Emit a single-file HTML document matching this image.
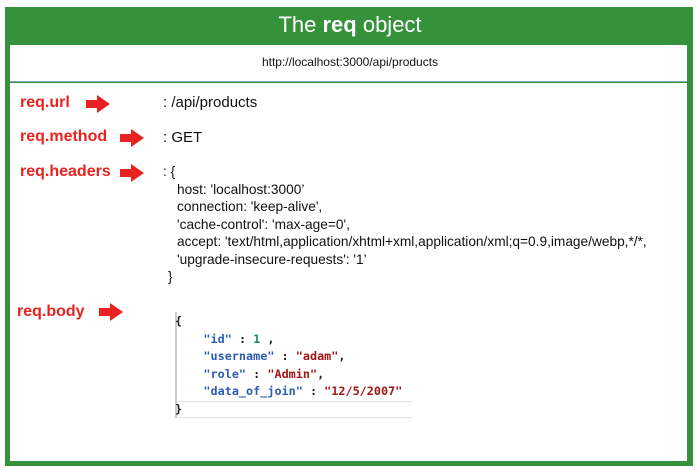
<html><head><style>
body{margin:0;width:700px;height:470px;background:#fff;position:relative;font-family:"Liberation Sans",sans-serif;overflow:hidden}
.a{position:absolute}
.lbl{color:#e8231f;font-weight:bold;font-size:16px;font-family:"Liberation Sans Narrow","Liberation Sans",sans-serif}
.arr{position:absolute;width:24px;height:18px}
.t{color:#111;font-size:15px}
.h{font-size:13.7px;color:#111;line-height:17.5px;white-space:nowrap}
.code{font-family:"DejaVu Sans Mono",monospace;font-size:11.8px;font-weight:bold;line-height:17.5px;white-space:pre}
</style></head><body>
<div class="a" style="left:5px;top:7px;width:688px;height:459px;background:#35913a"></div>
<div class="a" style="left:10px;top:45px;width:677px;height:36px;background:#fff;border-bottom:1px solid #8ab;"></div>
<div class="a" style="left:10px;top:83px;width:677px;height:378px;background:#fff"></div>
<div class="a" style="left:0;top:12px;width:700px;text-align:center;color:#fff;font-size:22px">The <b>req</b> object</div>
<div class="a" style="left:0;top:55px;width:700px;text-align:center;font-size:12px;color:#111">http://localhost:3000/api/products</div>

<div class="a lbl" style="left:20px;top:94px">req.url</div>
<svg class="arr" style="left:86px;top:95px" viewBox="0 0 24 18"><path d="M0 5h11V0l13 9-13 9v-5H0z" fill="#e8231f"/></svg>
<div class="a t" style="left:163px;top:94px">: /api/products</div>

<div class="a lbl" style="left:20px;top:128px">req.method</div>
<svg class="arr" style="left:120px;top:129px" viewBox="0 0 24 18"><path d="M0 5h11V0l13 9-13 9v-5H0z" fill="#e8231f"/></svg>
<div class="a t" style="left:163px;top:129px">: GET</div>

<div class="a lbl" style="left:20px;top:163px">req.headers</div>
<svg class="arr" style="left:120px;top:164px" viewBox="0 0 24 18"><path d="M0 5h11V0l13 9-13 9v-5H0z" fill="#e8231f"/></svg>
<div class="a h" style="left:163px;top:163px">: {<br>
<span style="padding-left:14px">host: 'localhost:3000’</span><br>
<span style="padding-left:14px">connection: 'keep-alive',</span><br>
<span style="padding-left:14px">'cache-control': 'max-age=0',</span><br>
<span style="padding-left:14px">accept: 'text/html,application/xhtml+xml,application/xml;q=0.9,image/webp,*/*,</span><br>
<span style="padding-left:14px">'upgrade-insecure-requests': '1’</span><br>
<span style="padding-left:5px">}</span></div>

<div class="a lbl" style="left:17px;top:303px">req.body</div>
<svg class="arr" style="left:99px;top:303px" viewBox="0 0 24 18"><path d="M0 5h11V0l13 9-13 9v-5H0z" fill="#e8231f"/></svg>

<div class="a" style="left:175px;top:312px;width:2px;height:106px;background:#ccc"></div>
<div class="a" style="left:177px;top:401px;width:235px;height:1px;background:#e4e4e4"></div>
<div class="a" style="left:177px;top:417px;width:235px;height:1px;background:#e4e4e4"></div>
<div class="a code" style="left:175px;top:313px;color:#222">{
    <span style="color:#2a5db0">"id"</span> : <span style="color:#1a8a5a">1</span> ,
    <span style="color:#2a5db0">"username"</span> : <span style="color:#a31515">"adam"</span>,
    <span style="color:#2a5db0">"role"</span> : <span style="color:#a31515">"Admin"</span>,
    <span style="color:#2a5db0">"data_of_join"</span> : <span style="color:#a31515">"12/5/2007"</span>
}</div>
</body></html>
